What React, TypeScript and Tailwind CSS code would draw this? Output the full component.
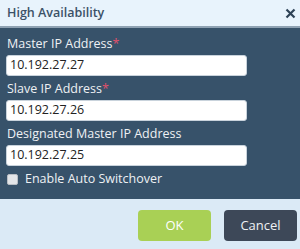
const fields = [
  { label: "Master IP Address", value: "10.192.27.27", required: true },
  { label: "Slave IP Address", value: "10.192.27.26", required: true },
  { label: "Designated Master IP Address", value: "10.192.27.25", required: false },
];

export default function App() {
  return (
    <div className="w-[300px] h-[249px] flex flex-col font-['Open_Sans',sans-serif]">
      {/* header */}
      <div className="h-[28px] flex items-center justify-between pl-[7px] pr-[3px] bg-[#e8f3fc] border-b-2 border-[#8fa2b3]">
        <span className="text-[12.5px] font-semibold text-[#3b5167]">High Availability</span>
        <svg width="11" height="11" viewBox="0 0 11 11" className="mr-[1px]">
          <path d="M1.5 1.5 L9.5 9.5 M9.5 1.5 L1.5 9.5" stroke="#2d4256" strokeWidth="2.2" />
        </svg>
      </div>

      {/* body */}
      <div className="h-[171px] bg-[#37526a] pt-[7px] pl-[6px] flex flex-col">
        {fields.map((f) => (
          <div key={f.label} className="flex flex-col mb-[4px]">
            <label className="h-[18px] leading-[18px] text-[12.5px] text-[#eef1f4] pl-[1px]">
              {f.label}
              {f.required && <span className="text-[#e2506a]">*</span>}
            </label>
            <div className="mt-[2px] w-[241px] h-[21px] bg-white rounded-[3px] border border-[#c9d3dc] flex items-center pl-[3px] text-[12.5px] text-[#222]">
              {f.value}
            </div>
          </div>
        ))}
        <div className="h-[18px] flex items-center gap-[7px] pl-[1px]">
          <div className="w-[11px] h-[11px] rounded-[2px] bg-[#e3e5e8] border border-[#b9bec4]" />
          <span className="text-[12.5px] text-[#eef1f4]">Enable Auto Switchover</span>
        </div>
      </div>

      {/* footer */}
      <div className="flex-1 bg-[#dbeaf6] flex justify-end items-start pt-[11px] pr-[3px] gap-[13px]">
        <button className="w-[73px] h-[31px] rounded-[4px] bg-[#a9d055] text-white text-[13px]">OK</button>
        <button className="w-[73px] h-[31px] rounded-[4px] bg-[#3d4858] text-[#eef1f4] text-[13px]">Cancel</button>
      </div>
    </div>
  );
}
